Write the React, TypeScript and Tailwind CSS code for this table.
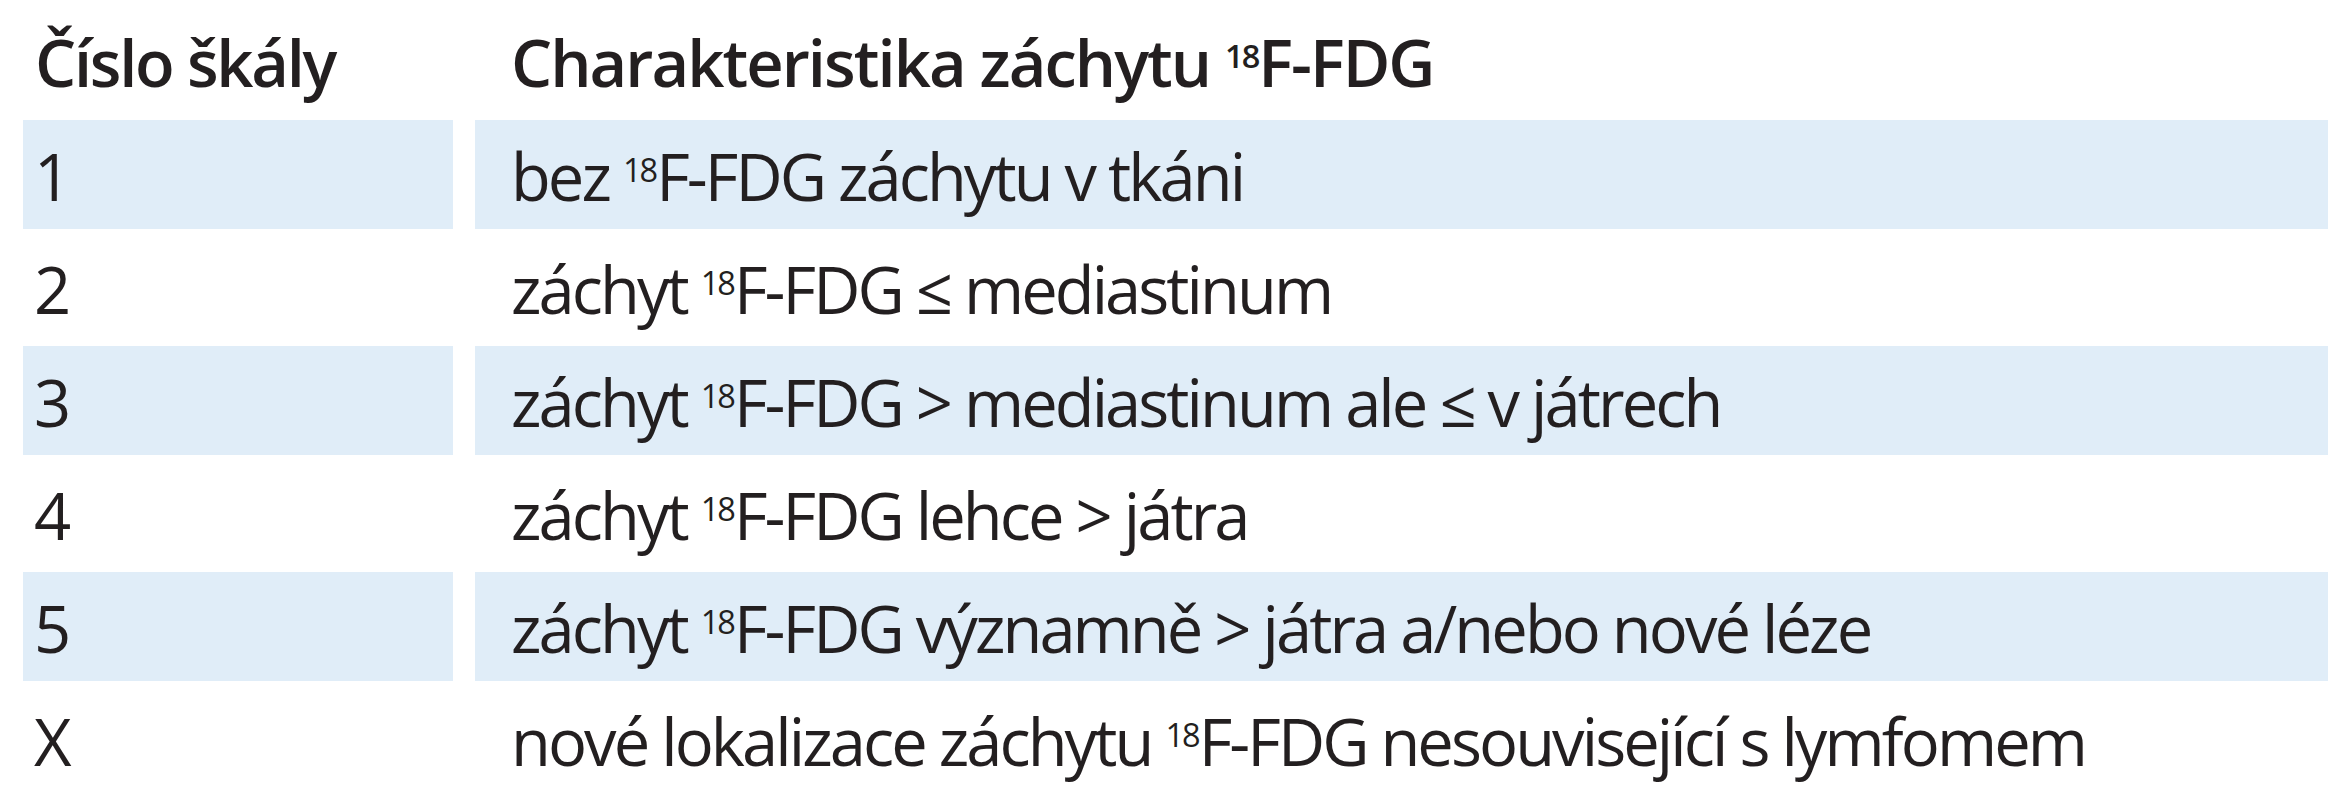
import React from "react";

function Sup() {
  return <span className="align-[0.6em] text-[0.5em] tracking-[-0.06em]">18</span>;
}

const rows: { n: string; text: React.ReactNode }[] = [
  { n: "1", text: <>bez <Sup />F-FDG záchytu v tkáni</> },
  { n: "2", text: <>záchyt <Sup />F-FDG ≤ mediastinum</> },
  { n: "3", text: <>záchyt <Sup />F-FDG &gt; mediastinum ale ≤ v játrech</> },
  { n: "4", text: <>záchyt <Sup />F-FDG lehce &gt; játra</> },
  { n: "5", text: <>záchyt <Sup />F-FDG významně &gt; játra a/nebo nové léze</> },
  { n: "X", text: <>nové lokalizace záchytu <Sup />F-FDG nesouvisející s lymfomem</> },
];

const App = () => {
  return (
    <div
      className="w-[2346px] h-[800px] bg-white text-[#231f20] pl-[23px] pr-[18px]"
      style={{ fontFamily: '"Open Sans", "Noto Sans", sans-serif' }}
    >
      <div className="grid grid-cols-[430px_1fr] gap-x-[22px] text-[65px] tracking-[-0.045em] leading-none">
        <div className="h-[118px] flex items-center pl-[12px] pt-[6px] font-semibold tracking-[-0.035em]">
          <span>Číslo škály</span>
        </div>
        <div className="h-[118px] flex items-center pl-[36px] pt-[6px] font-semibold tracking-[-0.03em]">
          <span>
            Charakteristika záchytu <Sup />F-FDG
          </span>
        </div>
        {rows.map((r, i) => (
          <React.Fragment key={r.n}>
            <div
              className={`h-[113px] flex items-center pl-[11px] pt-[4px] ${
                i % 2 === 0 ? "bg-[#e0edf8] border-y-2 border-white" : ""
              }`}
            >
              <span>{r.n}</span>
            </div>
            <div
              className={`h-[113px] flex items-center pl-[36px] pt-[4px] ${
                i % 2 === 0 ? "bg-[#e0edf8] border-y-2 border-white" : ""
              }`}
            >
              <span>{r.text}</span>
            </div>
          </React.Fragment>
        ))}
      </div>
    </div>
  );
};

export default App;
